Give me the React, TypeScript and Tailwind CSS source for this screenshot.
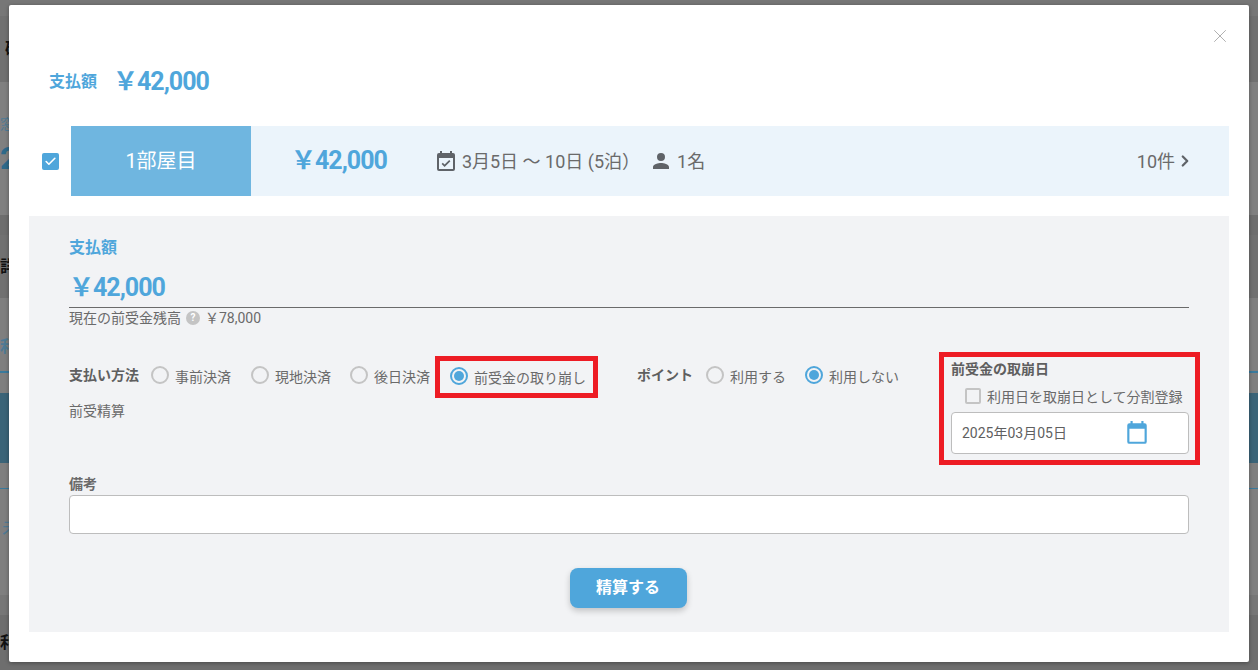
import React from "react";
import { Check, ChevronRight, X } from "lucide-react";

const font = "[font-family:Roboto,'Noto_Sans_CJK_JP',sans-serif]";

const Radio = ({ label, checked }: { label: string; checked?: boolean }) => (
  <label className="flex items-center">
    <span
      className={`flex h-[18px] w-[18px] items-center justify-center rounded-full border-2 ${
        checked ? "border-[#4fa6db]" : "border-[#c4c4c4]"
      }`}
    >
      {checked && <span className="h-[10px] w-[10px] rounded-full bg-[#4fa6db]" />}
    </span>
    <span className="ml-[6px] mt-[3px] text-[14px] leading-none text-[#6a6a6a]">{label}</span>
  </label>
);

// the page behind the dialog, only its edges are visible
const Backdrop = () => (
  <div className="flex h-[670px] w-full flex-col bg-[#7f7f7f] text-[#111]">
    <div className="h-[16px] bg-[#777777]" />
    <div className="flex h-[66px] items-center bg-[#717171] pl-[5px] text-[16px] font-bold">確認</div>
    <div className="h-[133px] bg-[#808080] pt-[32px]">
      <div className="text-[14px] leading-[20px] text-[#4f7a94]">窓口</div>
      <div className="mt-[4px] text-[32px] font-bold leading-[40px] text-[#2f6a8a]">2</div>
    </div>
    <div className="h-[20px] bg-[#6e6e6e]" />
    <div className="flex h-[63px] items-center bg-[#717171] text-[16px] font-bold">詳細</div>
    <div className="flex h-[75px] flex-col justify-end border-b-2 border-[#3a7a9c] bg-[#7f7f7f] pb-[12px]">
      <span className="text-[16px] font-bold text-[#4f7a94]">利用</span>
    </div>
    <div className="mt-[20px] h-[70px] bg-[#3b6478]" />
    <div className="mt-[25px] h-px bg-[#3a7a9c]" />
    <div className="h-[106px] pl-[2px] pt-[25px]">
      <span className="text-[18px] text-[#4f7a94]">未</span>
    </div>
    <div className="h-[20px] bg-[#777777]" />
    <div className="flex h-[55px] items-center bg-[#6e6e6e] text-[16px] font-bold">利用</div>
  </div>
);

const App = () => {
  return (
    <div className={`relative h-[670px] w-[1258px] overflow-hidden ${font}`}>
      <Backdrop />

      <div className="absolute left-[9px] top-[5px] flex h-[657px] w-[1240px] flex-col rounded-[2px] bg-white pt-[57px] shadow-[0_1px_4px_rgba(0,0,0,0.35)]">
        <X className="absolute right-[18px] top-[20px] h-[22px] w-[22px] text-[#a9a9a9]" strokeWidth={1} />

        <div className="flex h-[40px] items-center pl-[40px] text-[#4fa6db]">
          <span className="text-[16px] font-bold">支払額</span>
          <span className="ml-[16px] text-[25px] font-bold tracking-[-1px]">￥42,000</span>
        </div>

        <div className="mt-[24px] flex h-[70px] items-center pl-[33px] pr-[20px]">
          <span className="flex h-[17px] w-[17px] items-center justify-center rounded-[2px] bg-[#4fa6db]">
            <Check className="h-[13px] w-[13px] text-white" strokeWidth={3} />
          </span>
          <div className="ml-[12px] flex h-full flex-1 items-center bg-[#ebf4fb]">
            <div className="flex h-full w-[180px] items-center justify-center bg-[#6fb6e0] text-[20px] text-white">
              1部屋目
            </div>
            <span className="ml-[40px] text-[25px] font-bold tracking-[-1px] text-[#4fa6db]">￥42,000</span>
            <svg viewBox="0 0 24 24" className="ml-[47px] h-[24px] w-[24px] fill-[#5f6368]">
              <path d="M19 4h-1V2h-2v2H8V2H6v2H5a2 2 0 0 0-2 2v14a2 2 0 0 0 2 2h14a2 2 0 0 0 2-2V6a2 2 0 0 0-2-2zm0 16H5V9h14v11z" />
              <path d="m10.6 18-3-3 1.2-1.2 1.8 1.8 4.6-4.6 1.2 1.2z" />
            </svg>
            <span className="ml-[4px] text-[18px] text-[#6a6a6a]">3月5日 ～ 10日 (5泊）</span>
            <svg viewBox="0 0 24 24" className="ml-[9px] h-[24px] w-[24px] fill-[#5f6368]">
              <path d="M12 12a4 4 0 1 0 0-8 4 4 0 0 0 0 8zm0 2c-2.7 0-8 1.3-8 4v2h16v-2c0-2.7-5.3-4-8-4z" />
            </svg>
            <span className="ml-[4px] text-[18px] text-[#6a6a6a]">1名</span>
            <span className="ml-auto text-[18px] text-[#6a6a6a]">10件</span>
            <ChevronRight className="ml-[1px] mr-[35px] h-[18px] w-[18px] text-[#5f6368]" strokeWidth={3} />
          </div>
        </div>

        <div className="mx-[20px] mt-[20px] flex h-[416px] flex-col bg-[#f2f3f5] px-[40px] pt-[22px]">
          <div className="text-[16px] font-bold leading-[20px] text-[#4fa6db]">支払額</div>
          <div className="mt-[5px] h-[45px] border-b border-[#6a6a6a] pt-[5px] text-[25px] font-bold leading-[40px] tracking-[-1px] text-[#4fa6db]">
            ￥42,000
          </div>
          <div className="mt-[1px] flex h-[18px] items-center text-[14px] text-[#6a6a6a]">
            現在の前受金残高
            <span className="ml-[5px] flex h-[14px] w-[14px] items-center justify-center rounded-full bg-[#c4c4c4] text-[10px] font-bold leading-none text-white">
              ?
            </span>
            <span className="ml-[5px]">￥78,000</span>
          </div>

          <div className="mt-[25px] flex h-[113px] items-start">
            <div className="w-[366px]">
              <div className="flex h-[46px] items-center">
                <span className="w-[82px] text-[14px] font-bold text-[#5f5f5f]">支払い方法</span>
                <div className="flex w-[100px]"><Radio label="事前決済" /></div>
                <div className="flex w-[99px]"><Radio label="現地決済" /></div>
                <div className="flex w-[85px]"><Radio label="後日決済" /></div>
              </div>
              <div className="mt-[3px] text-[14px] leading-[20px] text-[#6a6a6a]">前受精算</div>
            </div>
            <div className="mt-[4px] flex h-[42px] w-[163px] shrink-0 items-center border-[5px] border-[#ed1c24] pb-[2px] pl-[10px]">
              <Radio label="前受金の取り崩し" checked />
            </div>
            <div className="ml-[39px] flex h-[46px] items-center">
              <span className="w-[69px] text-[14px] font-bold text-[#5f5f5f]">ポイント</span>
              <div className="flex w-[99px]"><Radio label="利用する" /></div>
              <Radio label="利用しない" checked />
            </div>
            <div className="-mr-[11px] ml-auto h-[113px] w-[261px] border-[5px] border-[#ed1c24] px-[7px] pt-[2px]">
              <div className="text-[14px] font-bold leading-[20px] text-[#5f5f5f]">前受金の取崩日</div>
              <div className="mt-[8px] flex items-center pl-[14px]">
                <span className="h-[16px] w-[16px] rounded-[2px] border-2 border-[#c4c4c4]" />
                <span className="ml-[6px] mt-[3px] text-[14px] leading-none text-[#6a6a6a]">利用日を取崩日として分割登録</span>
              </div>
              <div className="mt-[8px] flex h-[42px] w-[238px] items-center rounded-[4px] border border-[#bdbdbd] bg-white pl-[10px] text-[14px] text-[#5f5f5f]">
                <span className="w-[163px]">2025年03月05日</span>
                <svg viewBox="0 0 24 24" className="-ml-[1px] h-[26px] w-[26px] fill-[#4fa6db]">
                  <path d="M19 3h-1V1h-2v2H8V1H6v2H5a2 2 0 0 0-2 2v15a2 2 0 0 0 2 2h14a2 2 0 0 0 2-2V5a2 2 0 0 0-2-2zm0 17H5V8h14v12z" />
                </svg>
              </div>
            </div>
          </div>

          <div className="mt-[9px] text-[14px] font-bold leading-[20px] text-[#6a6a6a]">備考</div>
          <div className="mt-[1px] h-[39px] rounded-[4px] border border-[#bdbdbd] bg-white" />

          <button className="mx-auto mt-[34px] h-[40px] w-[117px] -translate-x-[1px] rounded-[8px] bg-[#4fa6db] text-[16px] font-bold text-white shadow-[0_3px_6px_rgba(0,0,0,0.2)]">
            精算する
          </button>
        </div>
      </div>
    </div>
  );
};

export default App;
